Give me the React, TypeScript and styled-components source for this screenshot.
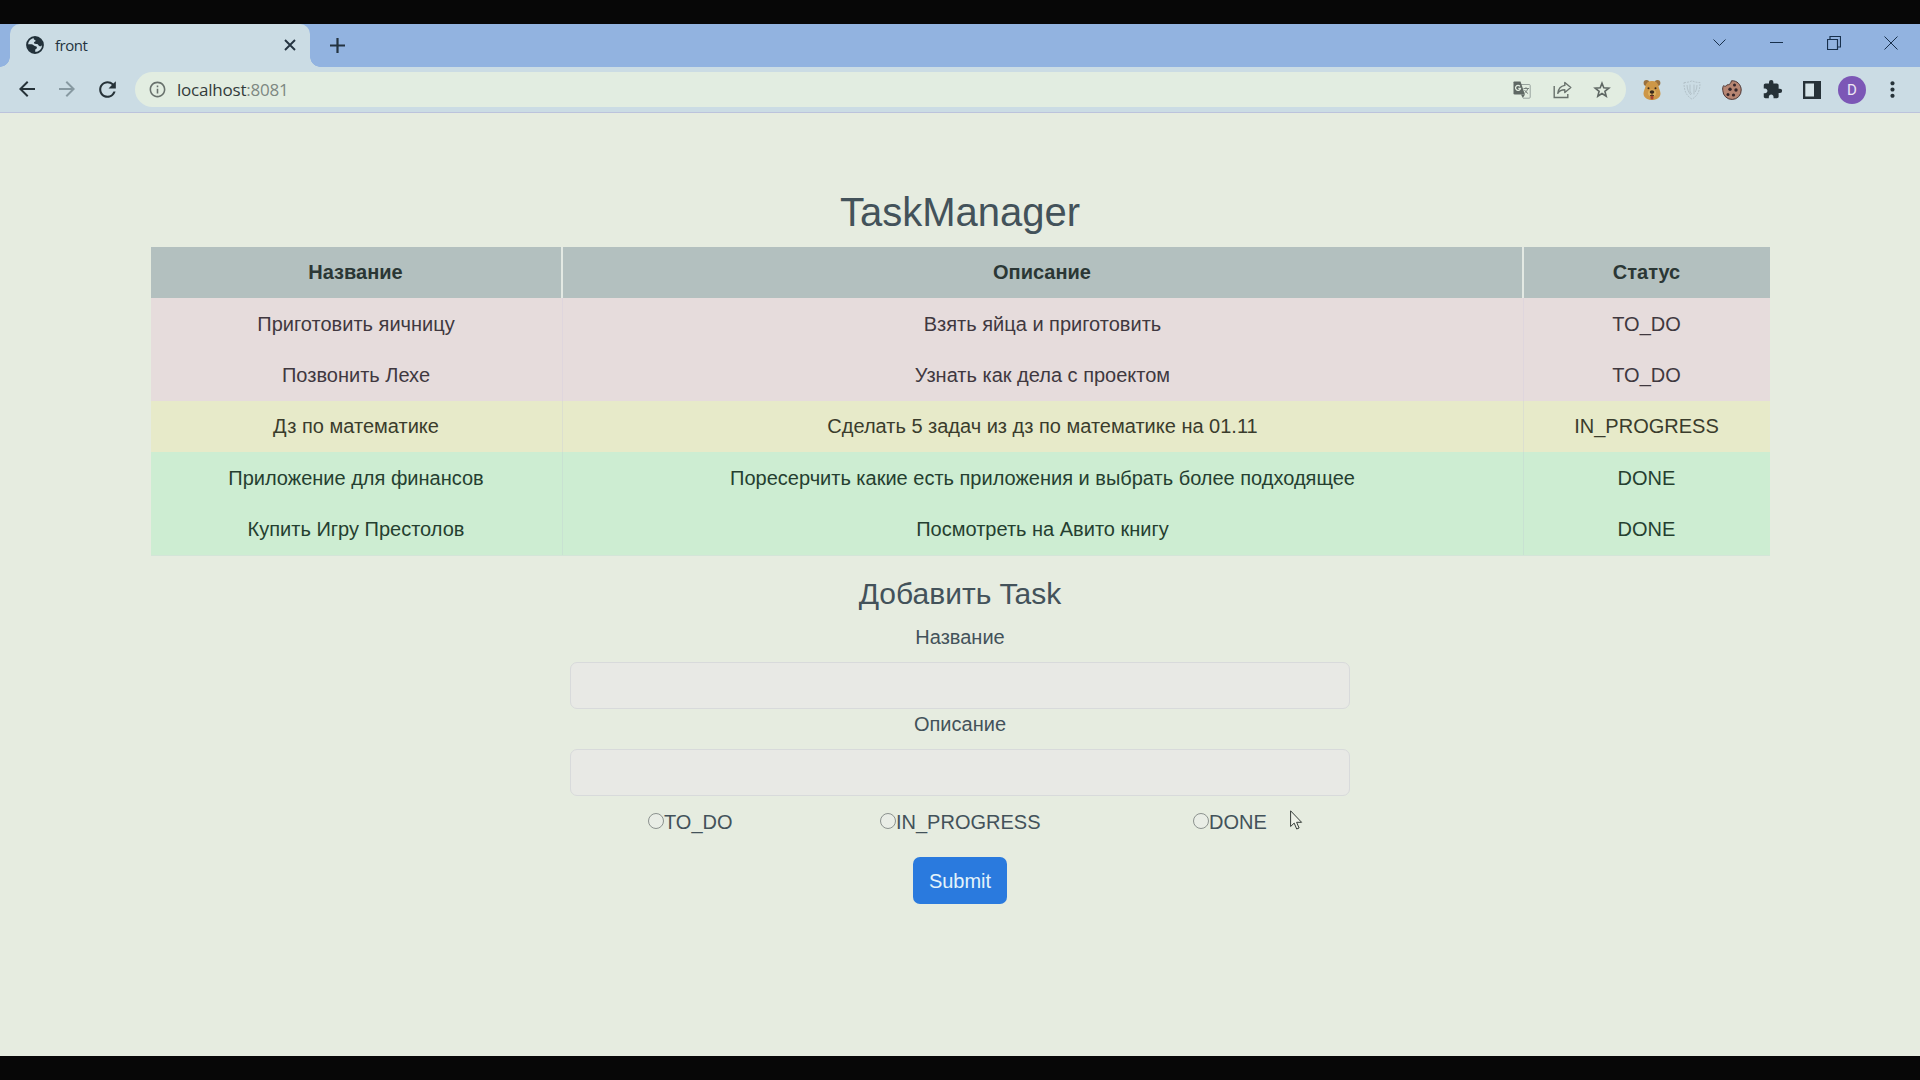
import React from "react";
import styled, { createGlobalStyle } from "styled-components";
import {
  MdArrowBack, MdArrowForward, MdRefresh, MdInfoOutline,
  MdExtension, MdMoreVert,
} from "react-icons/md";

const Global = createGlobalStyle`
  * { box-sizing: border-box; }
  body { margin: 0; background: #070707; overflow: hidden; }
  svg { display: block; flex: none; }
`;

const Screen = styled.div`
  width: 1920px;
  height: 1080px;
  padding: 24px 0;
  background: #070707;
  display: flex;
  flex-direction: column;
  font-family: "Liberation Sans", Arial, sans-serif;
`;

const TabStrip = styled.div`
  height: 43px;
  padding-left: 10px;
  background: #92b3e0;
  display: flex;
  align-items: stretch;
`;

const Tab = styled.div`
  position: relative;
  width: 300px;
  padding: 0 14px 1px 16px;
  border-radius: 10px 10px 0 0;
  background: #cbdce4;
  color: #243340;
  display: flex;
  align-items: center;

  &::before,
  &::after {
    content: "";
    position: absolute;
    bottom: 0;
    width: 10px;
    height: 10px;
  }
  &::before {
    left: -10px;
    background: radial-gradient(circle at 0 0, transparent 9.5px, #cbdce4 10px);
  }
  &::after {
    right: -10px;
    background: radial-gradient(circle at 100% 0, transparent 9.5px, #cbdce4 10px);
  }
`;

const TabTitle = styled.span`
  flex: 1;
  margin-left: 11px;
  padding-bottom: 1px;
  font: 15px/20px "Open Sans", sans-serif;
  letter-spacing: -0.5px;
`;

const NewTab = styled.div`
  width: 55px;
  color: #243340;
  display: grid;
  place-items: center;
  padding-bottom: 1px;
`;

const WindowButtons = styled.div`
  margin-left: auto;
  margin-right: 1px;
  display: grid;
  grid-template-columns: repeat(4, 57px);
  place-items: center;
  padding-bottom: 6px;
  color: #18304c;
`;

const Toolbar = styled.div`
  height: 46px;
  padding-right: 8px;
  background: #cbdce4;
  border-bottom: 1px solid #bcc3dc;
  display: flex;
  align-items: center;
`;

const NavButtons = styled.div`
  width: 135px;
  padding-left: 7px;
  display: grid;
  grid-template-columns: repeat(3, 40px);
  justify-items: center;
  color: #263238;
`;

const Dimmed = styled.span`
  color: #8799a1;
`;

const AddressBar = styled.div`
  width: 1491px;
  height: 35px;
  padding: 0 4px 0 13px;
  border-radius: 18px;
  background: #e2ede1;
  color: #68716c;
  display: flex;
  align-items: center;
`;

const Url = styled.div`
  flex: 1;
  margin-left: 10px;
  font: 17px/24px "Open Sans", sans-serif;
  letter-spacing: -0.22px;
  color: #323b3b;

  span { color: #7d8882; }
`;

const IconCell = styled.div`
  width: 40px;
  display: grid;
  place-items: center;
`;

const Extensions = styled.div`
  margin-left: 6px;
  display: flex;
  align-items: center;
  color: #263238;
`;

const Avatar = styled.div`
  width: 28px;
  height: 28px;
  border-radius: 50%;
  background: #7c57b6;
  color: #eee8f5;
  font: 15px/28px Roboto, sans-serif;
  text-align: center;
`;

const Page = styled.main`
  flex: 1;
  min-height: 0;
  padding-top: 75px;
  background: #e6ece0;
  color: #43525a;
  display: flex;
  flex-direction: column;
  align-items: center;
  font-size: 20px;
  line-height: 30px;
`;

const Title = styled.h1`
  margin: 0 0 10.5px;
  font-size: 40px;
  font-weight: 400;
  line-height: 48px;
`;

const Table = styled.div`
  width: 1619px;
  border-bottom: 1px solid #d3e5d8;
`;

type Tone = "head" | "todo" | "progress" | "done";

const tones: Record<Tone, { bg: string; line: string; ink: string }> = {
  head: { bg: "#b3c0bf", line: "#e3e9e3", ink: "#2b3735" },
  todo: { bg: "#e6dcdc", line: "#dfd6dd", ink: "#40383f" },
  progress: { bg: "#e7eac9", line: "#dcdfcf", ink: "#3a3c2c" },
  done: { bg: "#cdedd2", line: "#c8e2d2", ink: "#253f30" },
};

const Row = styled.div<{ $tone: Tone }>`
  height: 51.4px;
  display: grid;
  grid-template-columns: 412px 961px 1fr;
  background: ${(p) => tones[p.$tone].bg};
  color: ${(p) => tones[p.$tone].ink};
  font-weight: ${(p) => (p.$tone === "head" ? 700 : 400)};

  > div {
    display: flex;
    align-items: center;
    justify-content: center;
  }
  > div:not(:last-child) {
    border-right: ${(p) => (p.$tone === "head" ? 2 : 1)}px solid ${(p) => tones[p.$tone].line};
  }
`;

const Form = styled.form`
  width: 780px;
  margin-top: 19px;
  display: flex;
  flex-direction: column;
  align-items: center;
`;

const FormTitle = styled.h2`
  margin: 0 0 9.5px;
  font-size: 30px;
  font-weight: 400;
  line-height: 38px;
`;

const Label = styled.label`
  margin-bottom: 10px;
`;

const Input = styled.input`
  width: 780px;
  height: 47px;
  border: 1px solid #d8dadb;
  border-radius: 7px;
  background: #e8e9e5;
  outline: none;
`;

const Choices = styled.div`
  align-self: stretch;
  margin: 10.5px 0 20.5px;
  padding-left: 78px;
  display: grid;
  grid-template-columns: 232px 313px auto;
`;

const Choice = styled.label`
  display: flex;
  align-items: center;
`;

const Radio = styled.input`
  appearance: none;
  width: 16px;
  height: 16px;
  margin: 0 0 2px 0;
  border: 1px solid #8c928f;
  border-radius: 50%;
  background: #e9ede6;
`;

const Submit = styled.button`
  width: 94px;
  height: 47px;
  padding: 0;
  border: 0;
  border-radius: 7px;
  background: #2a7ade;
  color: #e4f3fa;
  font: 20px/30px "Liberation Sans", Arial, sans-serif;
`;

const Cursor = styled.svg`
  position: absolute;
  left: 1290px;
  top: 810px;
`;

const GlobeIcon = () => (
  <svg width="18" height="18" viewBox="0 0 18 18">
    <circle cx="9" cy="9" r="8" fill="#cbdce4" stroke="#22313a" strokeWidth="1.800" />
    <path d="M8.500 1.200c4.500-.3 8 3 8.200 7.500-1 .9-1.700 1.700-2.900 1.500-1.500-.2-1.200-1.900-2.600-2.200-1.500-.3-3.200.2-3.300-1.300 0-1 1.400-.8 1.700-1.700.2-1-1.700-.9-1.900-1.900-.1-.7.300-1.300.8-1.900z" fill="#22313a" />
    <path d="M1.200 8.200h4.300c1.600 0 2 1.300 3.300 1.800 1.300.4 2.300.6 2.100 1.900-.2 1-1.500.9-1.700 1.900-.2 1 .6 1.600-.2 2.900-4.300 0-7.800-3.600-7.800-8.500z" fill="#22313a" />
  </svg>
);

const TranslateIcon = () => (
  <svg width="18" height="18" viewBox="0 0 18 18">
    <path d="M8 3.500h8.200a1 1 0 0 1 1 1v11.700a1 1 0 0 1-1 1H10" fill="none" stroke="#98a39e" />
    <path d="M1.200.5h6.300l4.400 13H1.800A1.3 1.3 0 0 1 .5 12.200V1.200A.7.7 0 0 1 1.200.5z" fill="#5f6864" />
    <path d="M8 13.500h4l-2.200 3.500z" fill="#5f6864" />
    <path d="M7 5.300A2.500 2.500 0 1 0 7.500 7.300H5.300" fill="none" stroke="#e2ede1" strokeWidth="1.300" />
    <path d="M10.500 7.500h5.500M13 6.200v1.300M14.700 7.700c-.5 2-1.800 3.300-3.200 4.400M11.500 9c.8 1.500 2 2.600 3.600 3.600" fill="none" stroke="#78827d" />
  </svg>
);

const ShareIcon = () => (
  <svg width="19" height="18" viewBox="0 0 19 18" fill="none" stroke="#68716c" strokeWidth="1.400">
    <path d="M1.200 5v11.500h13.600V13" />
    <path d="M11.800 1.500l6 5-6 5V8.700C8.300 8.700 6.300 9.800 4.800 12.300 5.300 8.300 7.500 5 11.800 4.400z" strokeLinejoin="round" />
  </svg>
);

const StarIcon = () => (
  <svg width="18" height="18" viewBox="0 0 18 18" fill="none" stroke="#5f6864" strokeWidth="1.600">
    <path d="M9 2.200l1.800 4.600 5 .3-3.900 3.200 1.300 4.900L9 12.500l-4.200 2.700 1.300-4.900-3.900-3.200 5-.3z" />
  </svg>
);

const BearIcon = () => (
  <svg width="20" height="22" viewBox="0 0 20 22">
    <circle cx="4.500" cy="4" r="2.900" fill="#98703f" />
    <circle cx="15.500" cy="4" r="2.900" fill="#98703f" />
    <path d="M10 2c3.500 0 6 1.800 6.600 5.500.4 2.500 1.900 4.500 1.900 7 0 4-3.800 6.500-8.500 6.500s-8.500-2.500-8.500-6.500c0-2.500 1.500-4.500 1.900-7C4 3.800 6.500 2 10 2z" fill="#cd9748" />
    <ellipse cx="10" cy="14" rx="4" ry="3.500" fill="#dfb25f" />
    <ellipse cx="10" cy="13" rx="2.300" ry="1.700" fill="#38291d" />
    <circle cx="6.500" cy="9.300" r="1" fill="#38291d" />
    <circle cx="13.500" cy="9.300" r="1" fill="#38291d" />
    <path d="M10 14v2M8 16.500h4" stroke="#5a3a22" />
    <path d="M8.500 17h3v2a1.500 1.500 0 0 1-3 0z" fill="#a8442f" />
  </svg>
);

const ShieldIcon = () => (
  <svg width="18" height="20" viewBox="0 0 18 20" fill="none" stroke="#b3c2c9">
    <path d="M1 2.500C4 2.500 6.500 2 9 .8c2.500 1.200 5 1.700 8 1.700 0 8-2 13-8 16.700C3 15.500 1 10.500 1 2.500z" strokeDasharray="2 1" />
    <path d="M4 5c.2 4.500 1.600 7.500 4 10M7 4.500v6c0 2 1 3 2 3M11 4.500v10M14 5c-.2 3-.7 5-1.800 7" />
  </svg>
);

const CookieIcon = () => (
  <svg width="20" height="20" viewBox="0 0 20 20">
    <path d="M9.500.8c5.500-.5 9.700 4 9.700 9.200a9.200 9.200 0 0 1-18.400.5C.4 8.500.8 7 1.500 5.700c1.300.9 3 .7 3.500-.9 1.800.2 3.600-.5 4.500-4z" fill="#b68572" stroke="#4d3735" />
    <g fill="#342529">
      <circle cx="12.500" cy="5" r="1.500" /><circle cx="8" cy="9.300" r="1.700" />
      <circle cx="14" cy="10" r="1.700" /><circle cx="6" cy="14.500" r="1.500" />
      <circle cx="11.500" cy="15" r="1.600" />
    </g>
  </svg>
);

const PanelIcon = () => (
  <svg width="18" height="18" viewBox="0 0 18 18">
    <path d="M0 0h18v18H0z" fill="#263238" />
    <path d="M2.300 2.500h8.700v13H2.300z" fill="#d5e4e8" />
  </svg>
);

const tasks: { tone: Tone; cells: string[] }[] = [
  { tone: "head", cells: ["Название", "Описание", "Статус"] },
  { tone: "todo", cells: ["Приготовить яичницу", "Взять яйца и приготовить", "TO_DO"] },
  { tone: "todo", cells: ["Позвонить Лехе", "Узнать как дела с проектом", "TO_DO"] },
  { tone: "progress", cells: ["Дз по математике", "Сделать 5 задач из дз по математике на 01.11", "IN_PROGRESS"] },
  { tone: "done", cells: ["Приложение для финансов", "Поресерчить какие есть приложения и выбрать более подходящее", "DONE"] },
  { tone: "done", cells: ["Купить Игру Престолов", "Посмотреть на Авито книгу", "DONE"] },
];

export default function App() {
  return (
    <Screen>
      <Global />
      <TabStrip>
        <Tab>
          <GlobeIcon />
          <TabTitle>front</TabTitle>
          <svg width="12" height="12" fill="none" stroke="currentColor" strokeWidth="1.900"><path d="M1 1l10 10M11 1L1 11" /></svg>
        </Tab>
        <NewTab>
          <svg width="15" height="15" fill="none" stroke="currentColor" strokeWidth="2.200"><path d="M7.500 0v15M0 7.500h15" /></svg>
        </NewTab>
        <WindowButtons>
          <svg width="13" height="7" fill="none" stroke="currentColor"><path d="M.5.5l6 6 6-6" /></svg>
          <svg width="13" height="1"><path d="M0 0h13v1H0z" fill="currentColor" /></svg>
          <svg width="14" height="14" fill="none" stroke="currentColor" strokeWidth="1.200"><path d="M.5 3.500h10v10H.5zM3 3V.5h10.500V11H11" /></svg>
          <svg width="14" height="14" fill="none" stroke="currentColor"><path d="M.5.5l13 13M13.500.5l-13 13" /></svg>
        </WindowButtons>
      </TabStrip>
      <Toolbar>
        <NavButtons>
          <MdArrowBack size={24} />
          <Dimmed><MdArrowForward size={24} /></Dimmed>
          <MdRefresh size={25} />
        </NavButtons>
        <AddressBar>
          <MdInfoOutline size={19} />
          <Url>localhost<span>:8081</span></Url>
          <IconCell><TranslateIcon /></IconCell>
          <IconCell><ShareIcon /></IconCell>
          <IconCell><StarIcon /></IconCell>
        </AddressBar>
        <Extensions>
          <IconCell><BearIcon /></IconCell>
          <IconCell><ShieldIcon /></IconCell>
          <IconCell><CookieIcon /></IconCell>
          <IconCell><MdExtension size={21} /></IconCell>
          <IconCell><PanelIcon /></IconCell>
          <IconCell><Avatar>D</Avatar></IconCell>
          <IconCell><MdMoreVert size={25} /></IconCell>
        </Extensions>
      </Toolbar>
      <Page>
        <Title>TaskManager</Title>
        <Table>
          {tasks.map((t, i) => (
            <Row key={i} $tone={t.tone}>
              {t.cells.map((c) => <div key={c}>{c}</div>)}
            </Row>
          ))}
        </Table>
        <Form>
          <FormTitle>Добавить Task</FormTitle>
          <Label htmlFor="name">Название</Label>
          <Input id="name" />
          <Label htmlFor="description">Описание</Label>
          <Input id="description" />
          <Choices>
            {["TO_DO", "IN_PROGRESS", "DONE"].map((s) => (
              <Choice key={s}><Radio type="radio" name="status" />{s}</Choice>
            ))}
          </Choices>
          <Submit type="button">Submit</Submit>
        </Form>
      </Page>
      <Cursor width="13" height="20" viewBox="0 0 13 20">
        <path d="M.6.8v15.700l3.600-3.400 2.500 5.900 2.400-1-2.500-5.700h5z" fill="#eef2e8" stroke="#343b37" />
      </Cursor>
    </Screen>
  );
}
